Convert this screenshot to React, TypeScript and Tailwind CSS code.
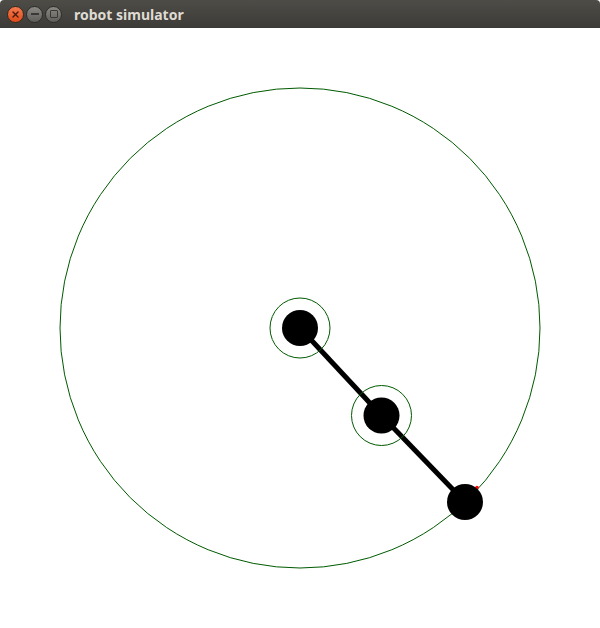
import React from "react";

const base = { x: 300, y: 300 };
const elbow = { x: 381.5, y: 387.5 };
const tip = { x: 465, y: 474 };

const TitleButton: React.FC<{ kind: "close" | "min" | "max" }> = ({ kind }) => {
  if (kind === "close") {
    return (
      <div className="w-[17px] h-[17px] rounded-full bg-gradient-to-b from-[#f47a4d] to-[#df4a16] border border-[#3a2a22] flex items-center justify-center">
        <svg width="7" height="7" viewBox="0 0 7 7">
          <line x1="1" y1="1" x2="6" y2="6" stroke="#4a1a0a" strokeWidth="1.4" strokeLinecap="round" />
          <line x1="6" y1="1" x2="1" y2="6" stroke="#4a1a0a" strokeWidth="1.4" strokeLinecap="round" />
        </svg>
      </div>
    );
  }
  return (
    <div className="w-[17px] h-[17px] rounded-full bg-gradient-to-b from-[#8a8984] to-[#5f5e5a] border border-[#2e2d2a] flex items-center justify-center">
      {kind === "min" ? (
        <div className="w-[8px] h-[2px] bg-[#3a3935]" />
      ) : (
        <div className="w-[8px] h-[8px] border-[1.5px] border-[#3a3935] rounded-[1px]" />
      )}
    </div>
  );
};

export default function App() {
  return (
    <div className="w-[600px] h-[628px] flex flex-col bg-white overflow-hidden">
      <div className="h-[28px] shrink-0 flex items-center rounded-t-[4px] bg-gradient-to-b from-[#4d4c47] to-[#3c3b37] pl-[7px]">
        <div className="flex items-center gap-[2px]">
          <TitleButton kind="close" />
          <TitleButton kind="min" />
          <TitleButton kind="max" />
        </div>
        <span
          className="ml-[12px] text-[14px] font-bold text-[#dfdbd2] leading-none pt-[1px]"
          style={{ fontFamily: '"Noto Sans", "Open Sans", sans-serif' }}
        >
          robot simulator
        </span>
      </div>

      <svg width="600" height="600" viewBox="0 0 600 600" className="block">
        <circle cx={base.x} cy={base.y} r="240" fill="none" stroke="#005a00" strokeWidth="1" />
        <line x1={base.x} y1={base.y} x2={elbow.x} y2={elbow.y} stroke="#000" strokeWidth="5" />
        <line x1={elbow.x} y1={elbow.y} x2={tip.x} y2={tip.y} stroke="#000" strokeWidth="5" />
        <circle cx={base.x} cy={base.y} r="30" fill="none" stroke="#005a00" strokeWidth="1" />
        <circle cx={elbow.x} cy={elbow.y} r="30" fill="none" stroke="#005a00" strokeWidth="1" />
        <circle cx="477" cy="459.5" r="1.8" fill="#ff0000" />
        <circle cx={base.x} cy={base.y} r="18" fill="#000" />
        <circle cx={elbow.x} cy={elbow.y} r="18" fill="#000" />
        <circle cx={tip.x} cy={tip.y} r="18" fill="#000" />
      </svg>
    </div>
  );
}
